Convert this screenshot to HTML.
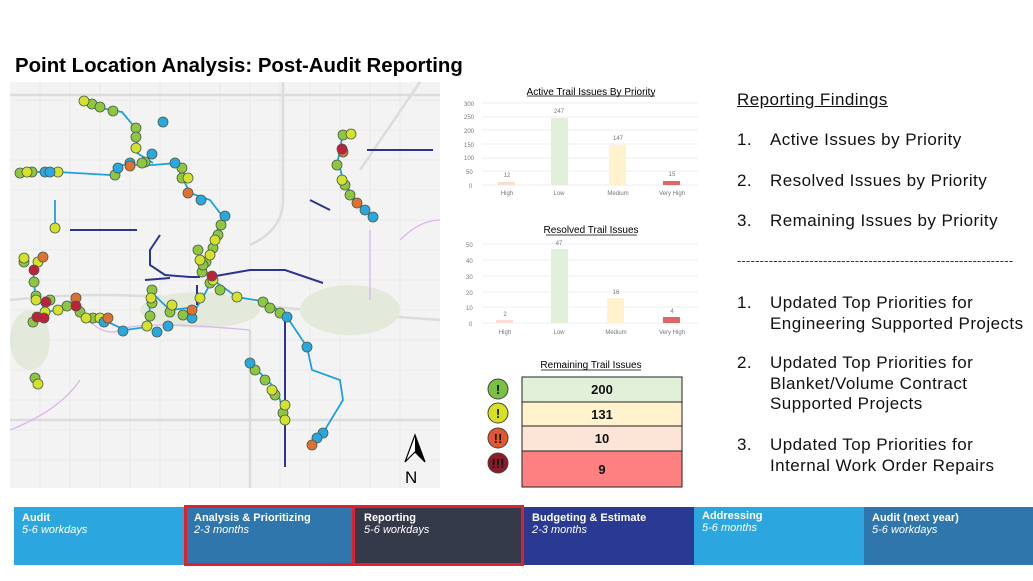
<!DOCTYPE html>
<html><head><meta charset="utf-8"><style>
body{margin:0;width:1033px;height:581px;background:#fff;position:relative;overflow:hidden;font-family:"Liberation Sans",sans-serif}
.a{position:absolute}
.t{font-size:20.4px;font-weight:bold;left:15px;top:55px;color:#000}
.r{font-size:17px;color:#111;line-height:20.5px;letter-spacing:0.45px}
.seg{position:absolute;top:507px;height:58px;color:#fff;font-size:11px;box-sizing:border-box;padding:5px 8px}
.seg b{display:block;font-size:11px}
.seg i{font-size:11px}
</style></head><body>
<div class="a t">Point Location Analysis: Post-Audit Reporting</div>

<svg class="a" style="left:0;top:0" width="1033" height="581">
<rect x="10" y="82" width="430" height="406" fill="#f3f3f3"/>
<g stroke="#e9e9e9" stroke-width="1" fill="none">
<path d="M10 100H440M10 130H440M10 160H440M10 190H440M10 220H440M10 250H440M10 280H440M10 310H440M10 340H440M10 370H440M10 400H440M10 430H440M10 460H440"/>
<path d="M40 82V488M70 82V488M100 82V488M130 82V488M160 82V488M190 82V488M220 82V488M250 82V488M280 82V488M310 82V488M340 82V488M370 82V488M400 82V488"/>
</g>
<g stroke="#dcdcdc" stroke-width="2.5" fill="none"><path d="M10 95H440M283 82V200Q283 230 250 245M10 300Q100 290 200 300T440 320M250 330V488M10 420H440M420 82L360 170"/></g>
<g fill="#e3eadc"><ellipse cx="200" cy="310" rx="60" ry="18"/><ellipse cx="350" cy="310" rx="50" ry="25"/><ellipse cx="30" cy="340" rx="20" ry="30"/></g>
<g stroke="#dcb4ee" stroke-width="1.3" fill="none"><path d="M10 430Q60 410 80 380M70 300Q100 340 120 330T250 330M400 240Q420 220 440 220M370 230V300"/></g>
<g stroke="#1fa0dc" stroke-width="1.8" fill="none">
<path d="M83 103L110 110L122 112L137 130L137 153L153 163M23 172L58 172L110 175L120 165L153 165L177 163L182 177L190 193L210 200L223 217L213 240L203 267L210 277M343 133L338 160L343 180L357 203L373 217M43 257L33 270L35 293L47 313L77 300L87 318L110 323L125 330L147 327L152 293L170 310L197 307L207 290L213 277M213 280L237 297L267 302L287 317L307 347L312 370L340 380L343 400L323 433L312 445M250 363L277 390L285 417M55 200V230"/>
</g>
<g stroke="#2b3590" stroke-width="2" fill="none">
<path d="M367 150H433M210 277L250 270L285 270L323 283M285 320V467M285 420V467M137 230H70M160 235L150 250V265L165 275L190 277L200 277M145 280L170 278M197 285V305M330 210L310 200"/>
</g>
<g stroke="#4b5a4a" stroke-width="0.8">
<g fill="#8dc63f"><circle cx="92" cy="104" r="5"/><circle cx="100" cy="107" r="5"/><circle cx="113" cy="111" r="5"/><circle cx="136" cy="128" r="5"/><circle cx="136" cy="137" r="5"/><circle cx="145" cy="162" r="5"/><circle cx="20" cy="173" r="5"/><circle cx="32" cy="172" r="5"/><circle cx="115" cy="175" r="5"/><circle cx="142" cy="163" r="5"/><circle cx="182" cy="168" r="5"/><circle cx="182" cy="178" r="5"/><circle cx="221" cy="225" r="5"/><circle cx="218" cy="235" r="5"/><circle cx="213" cy="248" r="5"/><circle cx="206" cy="262" r="5"/><circle cx="202" cy="272" r="5"/><circle cx="210" cy="283" r="5"/><circle cx="220" cy="290" r="5"/><circle cx="343" cy="135" r="5"/><circle cx="337" cy="165" r="5"/><circle cx="345" cy="185" r="5"/><circle cx="350" cy="195" r="5"/><circle cx="24" cy="262" r="5"/><circle cx="34" cy="282" r="5"/><circle cx="36" cy="296" r="5"/><circle cx="50" cy="300" r="5"/><circle cx="67" cy="306" r="5"/><circle cx="80" cy="312" r="5"/><circle cx="93" cy="318" r="5"/><circle cx="33" cy="322" r="5"/><circle cx="152" cy="290" r="5"/><circle cx="152" cy="303" r="5"/><circle cx="150" cy="316" r="5"/><circle cx="170" cy="312" r="5"/><circle cx="183" cy="315" r="5"/><circle cx="263" cy="302" r="5"/><circle cx="270" cy="308" r="5"/><circle cx="280" cy="313" r="5"/><circle cx="255" cy="370" r="5"/><circle cx="265" cy="380" r="5"/><circle cx="275" cy="395" r="5"/><circle cx="283" cy="413" r="5"/><circle cx="35" cy="378" r="5"/><circle cx="198" cy="250" r="5"/><circle cx="203" cy="265" r="5"/></g>
<g fill="#d4e22c"><circle cx="84" cy="101" r="5"/><circle cx="136" cy="148" r="5"/><circle cx="27" cy="172" r="5"/><circle cx="58" cy="172" r="5"/><circle cx="188" cy="178" r="5"/><circle cx="215" cy="240" r="5"/><circle cx="210" cy="255" r="5"/><circle cx="200" cy="260" r="5"/><circle cx="213" cy="280" r="5"/><circle cx="351" cy="134" r="5"/><circle cx="342" cy="180" r="5"/><circle cx="55" cy="228" r="5"/><circle cx="24" cy="258" r="5"/><circle cx="38" cy="262" r="5"/><circle cx="36" cy="300" r="5"/><circle cx="45" cy="312" r="5"/><circle cx="58" cy="310" r="5"/><circle cx="86" cy="318" r="5"/><circle cx="100" cy="318" r="5"/><circle cx="147" cy="326" r="5"/><circle cx="151" cy="298" r="5"/><circle cx="172" cy="305" r="5"/><circle cx="200" cy="298" r="5"/><circle cx="237" cy="297" r="5"/><circle cx="285" cy="405" r="5"/><circle cx="285" cy="420" r="5"/><circle cx="38" cy="384" r="5"/><circle cx="272" cy="390" r="5"/></g>
<g fill="#29a8e0"><circle cx="45" cy="172" r="5"/><circle cx="50" cy="172" r="5"/><circle cx="118" cy="168" r="5"/><circle cx="130" cy="163" r="5"/><circle cx="152" cy="154" r="5"/><circle cx="163" cy="122" r="5"/><circle cx="175" cy="163" r="5"/><circle cx="201" cy="200" r="5"/><circle cx="225" cy="216" r="5"/><circle cx="373" cy="217" r="5"/><circle cx="365" cy="210" r="5"/><circle cx="104" cy="322" r="5"/><circle cx="123" cy="331" r="5"/><circle cx="157" cy="332" r="5"/><circle cx="168" cy="326" r="5"/><circle cx="192" cy="318" r="5"/><circle cx="287" cy="317" r="5"/><circle cx="307" cy="347" r="5"/><circle cx="250" cy="363" r="5"/><circle cx="323" cy="433" r="5"/><circle cx="317" cy="438" r="5"/></g>
<g fill="#e07030"><circle cx="130" cy="166" r="5"/><circle cx="188" cy="193" r="5"/><circle cx="343" cy="152" r="5"/><circle cx="357" cy="203" r="5"/><circle cx="43" cy="257" r="5"/><circle cx="76" cy="298" r="5"/><circle cx="192" cy="310" r="5"/><circle cx="312" cy="445" r="5"/><circle cx="108" cy="318" r="5"/></g>
<g fill="#c0203a"><circle cx="342" cy="149" r="5"/><circle cx="34" cy="270" r="5"/><circle cx="46" cy="302" r="5"/><circle cx="76" cy="306" r="5"/><circle cx="37" cy="317" r="5"/><circle cx="44" cy="318" r="5"/><circle cx="212" cy="276" r="5"/></g>
</g>
<path d="M415 435L405 462L415 452L425 462Z" fill="#fff" stroke="#000" stroke-width="1.2"/><path d="M415 435V452L425 462Z" fill="#000"/>
<text x="405" y="483" font-size="17" font-family="Liberation Sans">N</text>

<g font-family="Liberation Sans" font-size="6" fill="#777">
<text x="591" y="95" font-size="10" fill="#000" text-anchor="middle">Active Trail Issues By Priority</text>
<line x1="527" y1="96" x2="655" y2="96" stroke="#000" stroke-width="0.8"/>
<g stroke="#e6e6e6" stroke-width="0.7"><path d="M482 103H698M482 117H698M482 130H698M482 144H698M482 158H698M482 171H698M482 185H698"/></g>
<text x="464" y="106">300</text><text x="464" y="119">250</text><text x="464" y="133">200</text><text x="464" y="147">150</text><text x="464" y="160">100</text><text x="466" y="174">50</text><text x="469" y="188">0</text>
<rect x="498" y="182" width="17" height="3" fill="#f8ddd0"/><rect x="551" y="118" width="17" height="67" fill="#e2efd9"/><rect x="609" y="145" width="17" height="40" fill="#fff2cc"/><rect x="663" y="181" width="17" height="4" fill="#e06666"/>
<text x="507" y="177" text-anchor="middle">12</text><text x="559" y="113" text-anchor="middle">247</text><text x="618" y="140" text-anchor="middle">147</text><text x="672" y="176" text-anchor="middle">15</text>
<text x="507" y="195" text-anchor="middle">High</text><text x="559" y="195" text-anchor="middle">Low</text><text x="618" y="195" text-anchor="middle">Medium</text><text x="672" y="195" text-anchor="middle">Very High</text>
<text x="591" y="233" font-size="10" fill="#000" text-anchor="middle">Resolved Trail Issues</text>
<line x1="546" y1="235" x2="637" y2="235" stroke="#000" stroke-width="0.8"/>
<g stroke="#e6e6e6" stroke-width="0.7"><path d="M482 244H698M482 260H698M482 276H698M482 292H698M482 307H698M482 323H698"/></g>
<text x="466" y="247">50</text><text x="466" y="263">40</text><text x="466" y="279">30</text><text x="466" y="295">20</text><text x="466" y="310">10</text><text x="469" y="326">0</text>
<rect x="496" y="320" width="17" height="3" fill="#f8ddd0"/><rect x="551" y="249" width="17" height="74" fill="#e2efd9"/><rect x="607" y="298" width="17" height="25" fill="#fff2cc"/><rect x="663" y="317" width="17" height="6" fill="#e06666"/>
<text x="505" y="316" text-anchor="middle">2</text><text x="559" y="245" text-anchor="middle">47</text><text x="616" y="294" text-anchor="middle">16</text><text x="672" y="313" text-anchor="middle">4</text>
<text x="505" y="334" text-anchor="middle">High</text><text x="559" y="334" text-anchor="middle">Low</text><text x="616" y="334" text-anchor="middle">Medium</text><text x="672" y="334" text-anchor="middle">Very High</text>
<text x="591" y="368" font-size="10" fill="#000" text-anchor="middle">Remaining Trail Issues</text>
<line x1="541" y1="370" x2="641" y2="370" stroke="#000" stroke-width="0.8"/>
</g>
<g stroke="#222" stroke-width="1">
<rect x="522" y="377" width="160" height="25" fill="#e2efd9"/><rect x="522" y="402" width="160" height="24" fill="#fff2cc"/><rect x="522" y="426" width="160" height="25" fill="#fce4d6"/><rect x="522" y="451" width="160" height="36" fill="#ff8080"/>
</g>
<g font-family="Liberation Sans" font-size="13" font-weight="bold" text-anchor="middle" fill="#111">
<text x="602" y="394">200</text><text x="602" y="419">131</text><text x="602" y="443">10</text><text x="602" y="474">9</text>
</g>
<g stroke="#444" stroke-width="1">
<circle cx="498" cy="389" r="10" fill="#7ac143"/><circle cx="498" cy="413" r="10" fill="#d8e021"/><circle cx="498" cy="438" r="10" fill="#e4572e"/><circle cx="498" cy="463" r="10" fill="#8b1a2b"/>
</g>
<g font-family="Liberation Sans" font-weight="bold" font-size="13" text-anchor="middle" fill="#111">
<text x="498" y="394">!</text><text x="498" y="418">!</text><text x="498" y="443">!!</text><text x="498" y="468">!!!</text>
</g>
</svg>

<div class="a r" style="left:737px;top:90px;text-decoration:underline">Reporting Findings</div>
<div class="a r" style="left:737px;top:130px">1.</div><div class="a r" style="left:770px;top:130px">Active Issues by Priority</div>
<div class="a r" style="left:737px;top:171px">2.</div><div class="a r" style="left:770px;top:171px">Resolved Issues by Priority</div>
<div class="a r" style="left:737px;top:211px">3.</div><div class="a r" style="left:770px;top:211px">Remaining Issues by Priority</div>
<div class="a" style="left:737px;top:253px;font-size:13px;color:#333;letter-spacing:0.2px">-------------------------------------------------------------</div>
<div class="a r" style="left:737px;top:293px">1.</div><div class="a r" style="left:770px;top:293px">Updated Top Priorities for<br>Engineering Supported Projects</div>
<div class="a r" style="left:737px;top:353px">2.</div><div class="a r" style="left:770px;top:353px">Updated Top Priorities for<br>Blanket/Volume Contract<br>Supported Projects</div>
<div class="a r" style="left:737px;top:435px">3.</div><div class="a r" style="left:770px;top:435px">Updated Top Priorities for<br>Internal Work Order Repairs</div>

<div class="seg" style="left:14px;width:170px;background:#2ba6de"><b>Audit</b><i>5-6 workdays</i></div>
<div class="seg" style="left:184px;width:168px;background:#2f76ad;border:3px solid #e0202a;border-right:none;top:505px;height:61px;padding:4px 7px"><b>Analysis &amp; Prioritizing</b><i>2-3 months</i></div>
<div class="seg" style="left:352px;width:172px;background:#353a4b;border:3px solid #e0202a;top:505px;height:61px;padding:4px 9px"><b>Reporting</b><i>5-6 workdays</i></div>
<div class="seg" style="left:524px;width:170px;background:#2a3a93"><b>Budgeting &amp; Estimate</b><i>2-3 months</i></div>
<div class="seg" style="left:694px;width:170px;background:#2ba6de;padding-top:3px"><b>Addressing</b><i>5-6 months</i></div>
<div class="seg" style="left:864px;width:169px;background:#2f76ad"><b>Audit (next year)</b><i>5-6 workdays</i></div>
</body></html>
